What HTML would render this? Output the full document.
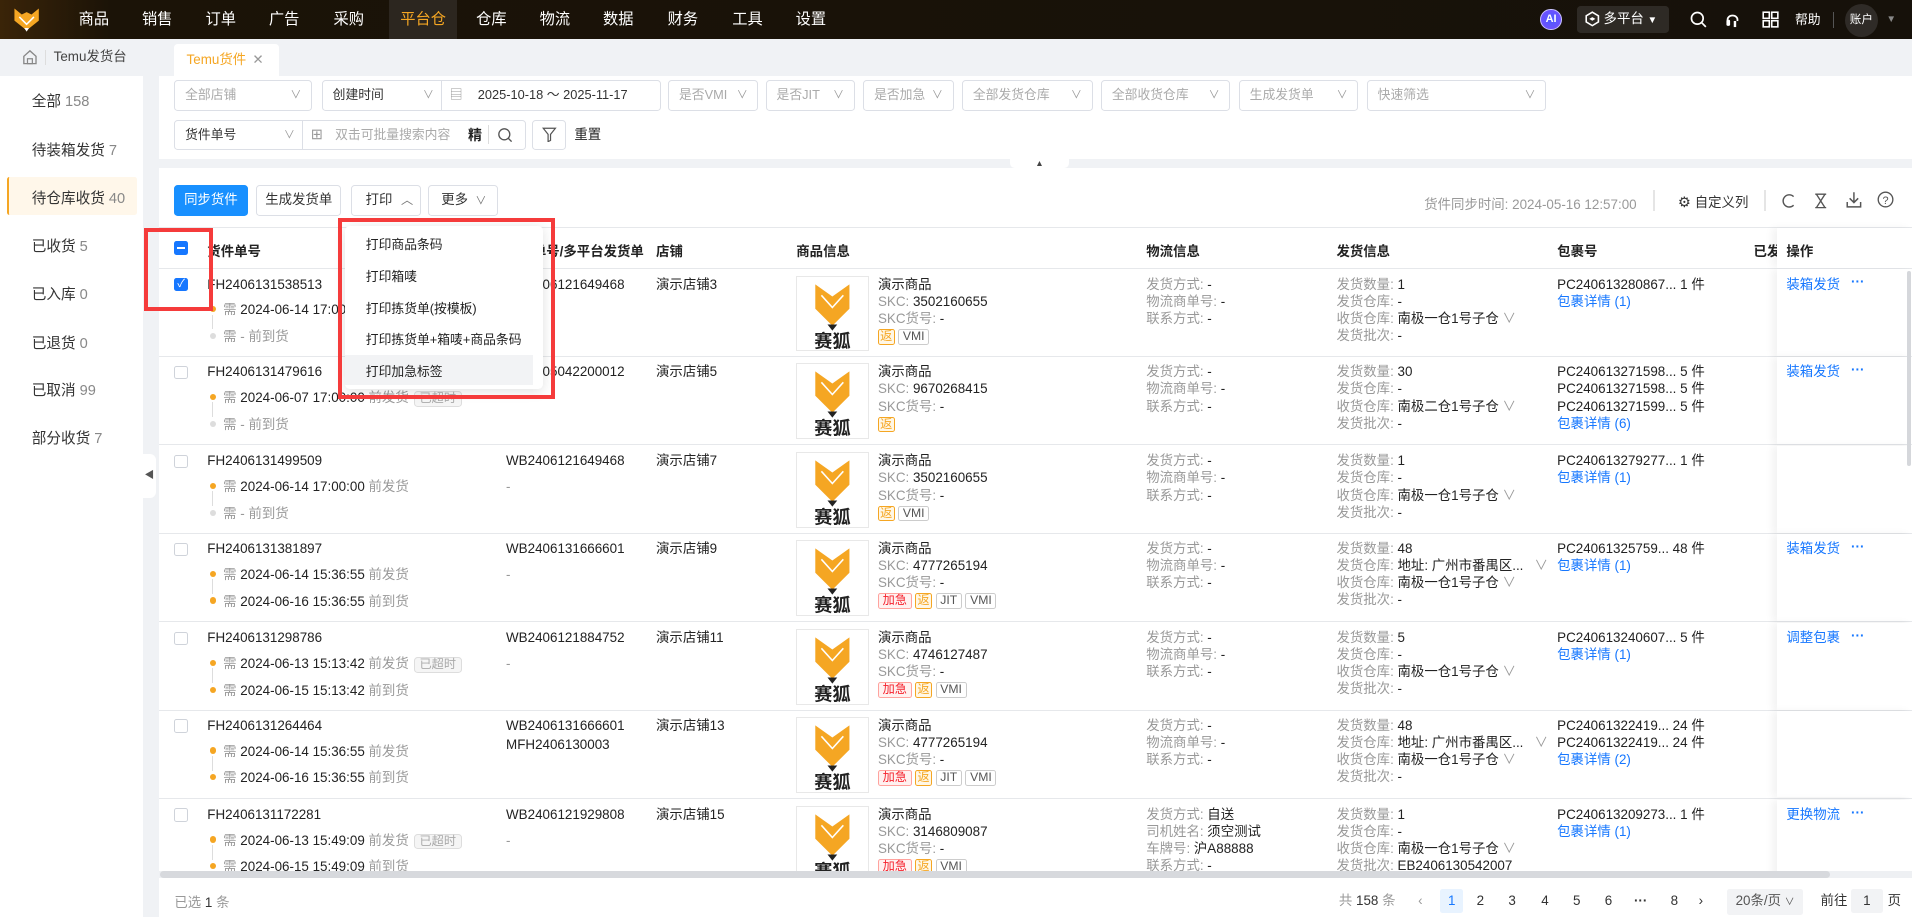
<!DOCTYPE html>
<html><head><meta charset="utf-8">
<style>
html{zoom:1.21939;overflow:hidden;height:752px}
*{box-sizing:border-box;margin:0;padding:0}
body{width:1568px;height:752px;overflow:hidden;position:relative;background:#f0f2f5;font-family:"Liberation Sans","Noto Sans CJK SC",sans-serif;font-size:11px;color:#222}
.a{position:absolute;white-space:nowrap}
.top{position:absolute;left:0;top:0;width:1568px;height:32px;background:linear-gradient(90deg,#3a2408 0,#1b1307 90px,#16110a 100%)}
.nav{position:absolute;top:0;height:32px;line-height:32px;color:#fff;font-size:12.5px;text-align:center}
.tabbar{position:absolute;left:0;top:32px;width:1568px;height:30px;background:#f0f2f5}
.side{position:absolute;left:0;top:62px;width:117px;height:690px;background:#fff}
.side div{position:absolute;left:26px;font-size:12px;color:#333}
.side span{color:#888}
.panel{position:absolute;background:#fff}
.sel{position:absolute;height:25px;border:1px solid #dcdfe6;border-radius:3px;background:#fff;line-height:23px;padding-left:8px;color:#aaa;font-size:10.5px}
.sel i{position:absolute;right:8px;top:0;font-style:normal;color:#999;font-size:9px}
.btn{position:absolute;top:152px;height:25px;border:1px solid #dcdfe6;border-radius:3px;background:#fff;line-height:23px;text-align:center;font-size:11px;color:#333}
.th{position:absolute;top:197px;font-weight:bold;font-size:11px;color:#222}
.row{position:absolute;left:130px;width:1438px;height:72px;border-bottom:1px solid #e6e8eb;background:#fff}
.row .a{line-height:14px}
.g{color:#999}
.b{color:#1677ff}
.cb{position:absolute;width:11px;height:11px;border:1px solid #cfd3da;border-radius:2px;background:#fff}
.dot{position:absolute;width:5px;height:5px;border-radius:50%;background:#f5a623}
.dot.gr{background:#ddd}
.vl{position:absolute;width:1px;height:12px;background:#ddd}
.img{position:absolute;width:60px;height:62px;border:1px solid #e8e8e8;background:#fff}
.tag{display:inline-block;height:13px;line-height:11px;padding:0 3px;border:1px solid #ccc;border-radius:2px;font-size:10px;color:#555;margin-right:3px;background:#fff}
.tag.o{border-color:#f5a623;color:#f5a623;background:#fff7e6;padding:0 1px}
.tag.r{border-color:#ffa39e;color:#f5222d;background:#fff1f0}
.ov{display:inline-block;height:13px;line-height:11px;padding:0 4px;border:1px solid #ddd;border-radius:3px;background:#f5f5f5;color:#aaa;font-size:10px;margin-left:4px}
.act{position:absolute;left:1327px;top:0;width:111px;height:71px;background:#fff;box-shadow:-4px 0 6px rgba(0,0,0,.05)}
.pg{position:absolute;top:729px;font-size:11px;color:#333;line-height:20px;text-align:center}
</style></head><body>

<div class="top">
  <svg class="a" style="left:10px;top:5px" width="24" height="22" viewBox="0 0 24 22"><path d="M2 2 L8 7 L12 5 L16 7 L22 2 L22 12 L12 20 L2 12 Z" fill="#f5a623"/><path d="M6 9 L12 15 L18 9" stroke="#fff" stroke-width="1.3" fill="none"/><path d="M10 18 L14 18 L12 21 Z" fill="#fff"/></svg>
  <div class="nav" style="left:62px;width:30px">商品</div>
  <div class="nav" style="left:114px;width:30px">销售</div>
  <div class="nav" style="left:166px;width:30px">订单</div>
  <div class="nav" style="left:218px;width:30px">广告</div>
  <div class="nav" style="left:271px;width:30px">采购</div>
  <div class="nav" style="left:319px;width:56px;background:#2c261f;color:#f5a623">平台仓</div>
  <div class="nav" style="left:388px;width:30px">仓库</div>
  <div class="nav" style="left:440px;width:30px">物流</div>
  <div class="nav" style="left:492px;width:30px">数据</div>
  <div class="nav" style="left:545px;width:30px">财务</div>
  <div class="nav" style="left:598px;width:30px">工具</div>
  <div class="nav" style="left:650px;width:30px">设置</div>
  <div class="a" style="left:1263px;top:7px;width:18px;height:18px;border-radius:50%;background:radial-gradient(circle,#4a5bff,#7c4dff);border:1.5px solid #c9c4ff;color:#fff;font-size:9px;font-weight:bold;text-align:center;line-height:15px">AI</div>
  <div class="a" style="left:1293px;top:5px;width:76px;height:22px;background:#2e2a25;border-radius:3px;color:#fff;font-size:11px;line-height:22px;padding-left:7px">
    <svg style="vertical-align:-3px" width="12" height="13" viewBox="0 0 12 13"><path d="M6 1 L11 4 L11 9 L6 12 L1 9 L1 4 Z" fill="none" stroke="#fff" stroke-width="1.3"/><path d="M3.5 6.5 L6 5 L8.5 6.5 L6 8 Z" fill="#fff"/></svg> 多平台 <span style="font-size:8px">▼</span></div>
  <svg class="a" style="left:1386px;top:9px" width="14" height="14" viewBox="0 0 14 14"><circle cx="6" cy="6" r="4.8" fill="none" stroke="#fff" stroke-width="1.4"/><path d="M9.5 9.5 L13 13" stroke="#fff" stroke-width="1.4"/></svg>
  <svg class="a" style="left:1414px;top:8px" width="14" height="16" viewBox="0 0 14 16"><path d="M3 9 C2 3 12 3 11 9" fill="none" stroke="#fff" stroke-width="1.5"/><rect x="2" y="8" width="3" height="5" rx="1" fill="#fff"/><path d="M9 9 L9 14" stroke="#fff" stroke-width="2"/></svg>
  <svg class="a" style="left:1445px;top:9px" width="14" height="14" viewBox="0 0 14 14"><rect x="1" y="1" width="5" height="5" fill="none" stroke="#fff" stroke-width="1.3"/><rect x="8" y="1" width="5" height="5" fill="none" stroke="#fff" stroke-width="1.3"/><rect x="1" y="8" width="5" height="5" fill="none" stroke="#fff" stroke-width="1.3"/><rect x="8" y="8" width="5" height="5" fill="none" stroke="#fff" stroke-width="1.3"/></svg>
  <div class="a" style="left:1472px;top:0;line-height:32px;color:#fff;font-size:10.5px">帮助</div>
  <div class="a" style="left:1503px;top:10px;width:1px;height:13px;background:#555"></div>
  <div class="a" style="left:1513px;top:3px;width:27px;height:27px;border-radius:50%;background:#2f2b27;color:#fff;font-size:9.5px;line-height:27px;text-align:center">账户</div>
  <div class="a" style="left:1547px;top:0;line-height:32px;color:#888;font-size:8px">▼</div>
</div>

<div class="tabbar">
  <svg class="a" style="left:18px;top:8px" width="13" height="13" viewBox="0 0 13 13"><path d="M1.5 6 L6.5 1.5 L11.5 6 L11.5 12 L1.5 12 Z" fill="none" stroke="#888" stroke-width="1.1"/><rect x="4.5" y="8" width="4" height="4" fill="none" stroke="#888"/></svg>
  <div class="a" style="left:37px;top:9px;width:1px;height:12px;background:#ddd"></div>
  <div class="a" style="left:44px;top:0;line-height:30px;font-size:11px;color:#444">Temu发货台</div>
  <div class="a" style="left:143px;top:4px;width:86px;height:26px;background:#fff;border-radius:3px 3px 0 0;color:#f5a623;font-size:11px;line-height:26px;padding-left:10px">Temu货件 <span style="color:#999;margin-left:2px">✕</span></div>
</div>

<div class="side">
  <div style="top:12px">全部 <span>158</span></div>
  <div style="top:52px">待装箱发货 <span>7</span></div>
  <div class="a" style="left:6px!important;top:83px;width:106px;height:31px;background:#fff7ea;border-left:2px solid #f5a623;border-radius:2px"></div>
  <div style="top:91px">待仓库收货 <span>40</span></div>
  <div style="top:131px">已收货 <span>5</span></div>
  <div style="top:170px">已入库 <span>0</span></div>
  <div style="top:210px">已退货 <span>0</span></div>
  <div style="top:249px">已取消 <span>99</span></div>
  <div style="top:288px">部分收货 <span>7</span></div>
</div>
<div class="a" style="left:117px;top:372px;width:11px;height:36px;background:#fff;border-radius:0 5px 5px 0;color:#555;font-size:8px;line-height:36px;text-align:center">◀</div>

<div class="panel" style="left:130px;top:62px;width:1438px;height:68px"></div>
<div class="sel" style="left:143px;top:66px;width:113px">全部店铺<i>∨</i></div>
<div class="sel" style="left:264px;top:66px;width:278px;color:#333">创建时间<i style="right:auto;left:82px">∨</i>
  <span class="a" style="left:97px;top:0;width:1px;height:23px;background:#dcdfe6"></span>
  <span class="a" style="left:104px;top:0;color:#999">▤</span>
  <span class="a" style="left:127px;top:0;color:#333">2025-10-18 ～ 2025-11-17</span></div>
<div class="sel" style="left:548px;top:66px;width:74px">是否VMI<i>∨</i></div>
<div class="sel" style="left:628px;top:66px;width:73px">是否JIT<i>∨</i></div>
<div class="sel" style="left:708px;top:66px;width:74px">是否加急<i>∨</i></div>
<div class="sel" style="left:789px;top:66px;width:107px">全部发货仓库<i>∨</i></div>
<div class="sel" style="left:903px;top:66px;width:106px">全部收货仓库<i>∨</i></div>
<div class="sel" style="left:1016px;top:66px;width:98px">生成发货单<i>∨</i></div>
<div class="sel" style="left:1121px;top:66px;width:147px">快速筛选<i>∨</i></div>
<div class="sel" style="left:143px;top:98px;width:288px;color:#333">货件单号<i style="right:auto;left:89px">∨</i>
  <span class="a" style="left:104px;top:0;width:1px;height:23px;background:#dcdfe6"></span>
  <span class="a" style="left:111px;top:0;color:#999;font-size:12px">⊞</span>
  <span class="a" style="left:131px;top:0;color:#aaa">双击可批量搜索内容</span>
  <span class="a" style="left:240px;top:0;color:#222;font-weight:bold;font-size:11.5px">精</span>
  <span class="a" style="left:256px;top:4px;width:1px;height:15px;background:#ddd"></span>
  <svg class="a" style="left:264px;top:5px" width="13" height="13" viewBox="0 0 13 13"><circle cx="6" cy="6" r="4.5" fill="none" stroke="#555" stroke-width="1.1"/><path d="M9.3 9.3 L12 12" stroke="#555" stroke-width="1.1"/></svg></div>
<div class="sel" style="left:436px;top:98px;width:28px;padding:0"><svg class="a" style="left:8px;top:5px" width="12" height="13" viewBox="0 0 12 13"><path d="M1 1 L11 1 L7 6 L7 11 L5 12 L5 6 Z" fill="none" stroke="#555" stroke-width="1"/></svg></div>
<div class="a" style="left:471px;top:98px;line-height:25px;font-size:11px;color:#222">重置</div>
<div class="a" style="left:828px;top:130px;width:49px;height:8px;background:#fff;border-radius:0 0 4px 4px;font-size:7px;text-align:center;line-height:8px;color:#444">▲</div>

<div class="panel" style="left:130px;top:138px;width:1438px;height:614px"></div>
<div class="btn" style="left:143px;width:60px;background:#1890ff;border-color:#1890ff;color:#fff">同步货件</div>
<div class="btn" style="left:210px;width:70px">生成发货单</div>
<div class="btn" style="left:288px;width:57px;text-align:left;padding-left:11px">打印 <span style="color:#777;font-size:10px;margin-left:4px">︿</span></div>
<div class="btn" style="left:351px;width:57px;text-align:left;padding-left:10px">更多 <span style="color:#777;font-size:9px;margin-left:3px">∨</span></div>
<div class="a" style="left:1168px;top:158px;color:#999;font-size:11px">货件同步时间: 2024-05-16 12:57:00</div>
<div class="a" style="left:1356px;top:156px;width:1px;height:17px;background:#e5e5e5"></div>
<div class="a" style="left:1376px;top:157px;font-size:11px;color:#333"><span style="font-size:12px">⚙</span> 自定义列</div>
<div class="a" style="left:1447px;top:156px;width:1px;height:17px;background:#e5e5e5"></div>
<svg class="a" style="left:1461px;top:158px" width="12" height="13" viewBox="0 0 12 13"><path d="M9.5 3 A5 5 0 1 0 9.5 10" fill="none" stroke="#555" stroke-width="1.2"/></svg>
<svg class="a" style="left:1488px;top:158px" width="11" height="13" viewBox="0 0 11 13"><path d="M1 1 L10 1 M1 12 L10 12 M2 1 L9 12 M9 1 L2 12" stroke="#555" stroke-width="1.1" fill="none"/></svg>
<svg class="a" style="left:1514px;top:157px" width="13" height="14" viewBox="0 0 13 14"><path d="M6.5 1 L6.5 9 M3 6 L6.5 9.5 L10 6 M1 9 L1 13 L12 13 L12 9" stroke="#555" stroke-width="1.2" fill="none"/></svg>
<svg class="a" style="left:1539px;top:157px" width="14" height="14" viewBox="0 0 14 14"><circle cx="7" cy="7" r="6" fill="none" stroke="#555" stroke-width="1.1"/><text x="7" y="10.5" font-size="9" text-anchor="middle" fill="#555" font-family="Liberation Sans">?</text></svg>

<div class="a" style="left:130px;top:186px;width:1438px;height:1px;background:#e6e8eb"></div>
<div class="a" style="left:130px;top:220px;width:1438px;height:1px;background:#e6e8eb"></div>
<div class="a" style="left:143px;top:198px;width:11px;height:11px;background:#1677ff;border-radius:2px"><div class="a" style="left:2px;top:4.5px;width:7px;height:1.5px;background:#fff"></div></div>
<div class="th" style="left:170px">货件单号</div>
<div class="th" style="left:415px">物流单号/多平台发货单</div>
<div class="th" style="left:538px">店铺</div>
<div class="th" style="left:653px">商品信息</div>
<div class="th" style="left:940px">物流信息</div>
<div class="th" style="left:1096px">发货信息</div>
<div class="th" style="left:1277px">包裹号</div>
<div class="th" style="left:1438px">已发</div>
<div class="a" style="left:1457px;top:187px;width:111px;height:33px;background:#fff;box-shadow:-4px 0 6px rgba(0,0,0,.05)"></div>
<div class="th" style="left:1465px">操作</div>

<div class="a" style="left:0;top:221px;width:1568px;height:493px;overflow:hidden">
<div style="position:absolute;left:0;top:-221px;width:1568px;height:1000px">

<div class="row" style="top:221px">
  <div class="cb" style="left:13px;top:7px;background:#1677ff;border-color:#1677ff;color:#fff;font-size:9px;line-height:9px;text-align:center">✓</div>
  <div class="a" style="left:40px;top:5px">FH2406131538513</div>
  <div class="dot" style="left:42px;top:30px"></div><div class="vl" style="left:44px;top:37px"></div><div class="dot gr" style="left:42px;top:52px"></div>
  <div class="a" style="left:53px;top:26px"><span class="g">需</span> 2024-06-14 17:00:00 <span class="g">前发货</span></div>
  <div class="a" style="left:53px;top:48px"><span class="g">需 - 前到货</span></div>
  <div class="a" style="left:285px;top:5px">WB2406121649468</div>
  <div class="a g" style="left:285px;top:26px">-</div>
  <div class="a" style="left:408px;top:5px">演示店铺3</div>
  <div class="img" style="left:523px;top:5px"><svg width="58" height="60" viewBox="0 0 58 60"><path d="M15 6 L29 16 L43 6 L43 26 L29 40 L15 26 Z" fill="#f5a623"/><path d="M20 15 L29 25 L38 15" stroke="#fff" stroke-width="1.3" fill="none"/><path d="M25 39 L33 39 L29 44 Z" fill="#222"/><text x="29" y="58" font-size="15" font-weight="bold" text-anchor="middle" fill="#222" font-family="Noto Sans CJK SC">赛狐</text></svg></div>
  <div class="a" style="left:590px;top:5px">演示商品</div>
  <div class="a" style="left:590px;top:19px"><span class="g">SKC:</span> 3502160655</div>
  <div class="a" style="left:590px;top:33px"><span class="g">SKC货号:</span> -</div>
  <div class="a" style="left:590px;top:47px"><span class="tag o">返</span><span class="tag">VMI</span></div>
  <div class="a" style="left:810px;top:5px"><span class="g">发货方式:</span> -</div>
  <div class="a" style="left:810px;top:19px"><span class="g">物流商单号:</span> -</div>
  <div class="a" style="left:810px;top:33px"><span class="g">联系方式:</span> -</div>
  <div class="a" style="left:966px;top:5px"><span class="g">发货数量:</span> 1</div>
  <div class="a" style="left:966px;top:19px"><span class="g">发货仓库:</span> -</div>
  <div class="a" style="left:966px;top:33px"><span class="g">收货仓库:</span> 南极一仓1号子仓 <span class="g">∨</span></div>
  <div class="a" style="left:966px;top:47px"><span class="g">发货批次:</span> -</div>
  <div class="a" style="left:1147px;top:5px">PC240613280867... 1 件</div>
  <div class="a b" style="left:1147px;top:19px">包裹详情 (1)</div>
  <div class="act"><div class="a b" style="left:8px;top:5px">装箱发货</div><div class="a b" style="left:61px;top:3px;font-weight:bold">···</div></div>
</div>

<div class="row" style="top:293px">
  <div class="cb" style="left:13px;top:7px"></div>
  <div class="a" style="left:40px;top:5px">FH2406131479616</div>
  <div class="dot" style="left:42px;top:30px"></div><div class="vl" style="left:44px;top:37px"></div><div class="dot gr" style="left:42px;top:52px"></div>
  <div class="a" style="left:53px;top:26px"><span class="g">需</span> 2024-06-07 17:00:00 <span class="g">前发货</span><span class="ov">已超时</span></div>
  <div class="a" style="left:53px;top:48px"><span class="g">需 - 前到货</span></div>
  <div class="a" style="left:285px;top:5px">WB2405042200012</div>
  <div class="a g" style="left:285px;top:26px">-</div>
  <div class="a" style="left:408px;top:5px">演示店铺5</div>
  <div class="img" style="left:523px;top:5px"><svg width="58" height="60" viewBox="0 0 58 60"><path d="M15 6 L29 16 L43 6 L43 26 L29 40 L15 26 Z" fill="#f5a623"/><path d="M20 15 L29 25 L38 15" stroke="#fff" stroke-width="1.3" fill="none"/><path d="M25 39 L33 39 L29 44 Z" fill="#222"/><text x="29" y="58" font-size="15" font-weight="bold" text-anchor="middle" fill="#222" font-family="Noto Sans CJK SC">赛狐</text></svg></div>
  <div class="a" style="left:590px;top:5px">演示商品</div>
  <div class="a" style="left:590px;top:19px"><span class="g">SKC:</span> 9670268415</div>
  <div class="a" style="left:590px;top:33px"><span class="g">SKC货号:</span> -</div>
  <div class="a" style="left:590px;top:47px"><span class="tag o">返</span></div>
  <div class="a" style="left:810px;top:5px"><span class="g">发货方式:</span> -</div>
  <div class="a" style="left:810px;top:19px"><span class="g">物流商单号:</span> -</div>
  <div class="a" style="left:810px;top:33px"><span class="g">联系方式:</span> -</div>
  <div class="a" style="left:966px;top:5px"><span class="g">发货数量:</span> 30</div>
  <div class="a" style="left:966px;top:19px"><span class="g">发货仓库:</span> -</div>
  <div class="a" style="left:966px;top:33px"><span class="g">收货仓库:</span> 南极二仓1号子仓 <span class="g">∨</span></div>
  <div class="a" style="left:966px;top:47px"><span class="g">发货批次:</span> -</div>
  <div class="a" style="left:1147px;top:5px">PC240613271598... 5 件</div>
  <div class="a" style="left:1147px;top:19px">PC240613271598... 5 件</div>
  <div class="a" style="left:1147px;top:33px">PC240613271599... 5 件</div>
  <div class="a b" style="left:1147px;top:47px">包裹详情 (6)</div>
  <div class="act"><div class="a b" style="left:8px;top:5px">装箱发货</div><div class="a b" style="left:61px;top:3px;font-weight:bold">···</div></div>
</div>

<div class="row" style="top:366px">
  <div class="cb" style="left:13px;top:7px"></div>
  <div class="a" style="left:40px;top:5px">FH2406131499509</div>
  <div class="dot" style="left:42px;top:30px"></div><div class="vl" style="left:44px;top:37px"></div><div class="dot gr" style="left:42px;top:52px"></div>
  <div class="a" style="left:53px;top:26px"><span class="g">需</span> 2024-06-14 17:00:00 <span class="g">前发货</span></div>
  <div class="a" style="left:53px;top:48px"><span class="g">需 - 前到货</span></div>
  <div class="a" style="left:285px;top:5px">WB2406121649468</div>
  <div class="a g" style="left:285px;top:26px">-</div>
  <div class="a" style="left:408px;top:5px">演示店铺7</div>
  <div class="img" style="left:523px;top:5px"><svg width="58" height="60" viewBox="0 0 58 60"><path d="M15 6 L29 16 L43 6 L43 26 L29 40 L15 26 Z" fill="#f5a623"/><path d="M20 15 L29 25 L38 15" stroke="#fff" stroke-width="1.3" fill="none"/><path d="M25 39 L33 39 L29 44 Z" fill="#222"/><text x="29" y="58" font-size="15" font-weight="bold" text-anchor="middle" fill="#222" font-family="Noto Sans CJK SC">赛狐</text></svg></div>
  <div class="a" style="left:590px;top:5px">演示商品</div>
  <div class="a" style="left:590px;top:19px"><span class="g">SKC:</span> 3502160655</div>
  <div class="a" style="left:590px;top:33px"><span class="g">SKC货号:</span> -</div>
  <div class="a" style="left:590px;top:47px"><span class="tag o">返</span><span class="tag">VMI</span></div>
  <div class="a" style="left:810px;top:5px"><span class="g">发货方式:</span> -</div>
  <div class="a" style="left:810px;top:19px"><span class="g">物流商单号:</span> -</div>
  <div class="a" style="left:810px;top:33px"><span class="g">联系方式:</span> -</div>
  <div class="a" style="left:966px;top:5px"><span class="g">发货数量:</span> 1</div>
  <div class="a" style="left:966px;top:19px"><span class="g">发货仓库:</span> -</div>
  <div class="a" style="left:966px;top:33px"><span class="g">收货仓库:</span> 南极一仓1号子仓 <span class="g">∨</span></div>
  <div class="a" style="left:966px;top:47px"><span class="g">发货批次:</span> -</div>
  <div class="a" style="left:1147px;top:5px">PC240613279277... 1 件</div>
  <div class="a b" style="left:1147px;top:19px">包裹详情 (1)</div>
  <div class="act"></div>
</div>

<div class="row" style="top:438px">
  <div class="cb" style="left:13px;top:7px"></div>
  <div class="a" style="left:40px;top:5px">FH2406131381897</div>
  <div class="dot" style="left:42px;top:30px"></div><div class="vl" style="left:44px;top:37px"></div><div class="dot" style="left:42px;top:52px"></div>
  <div class="a" style="left:53px;top:26px"><span class="g">需</span> 2024-06-14 15:36:55 <span class="g">前发货</span></div>
  <div class="a" style="left:53px;top:48px"><span class="g">需</span> 2024-06-16 15:36:55 <span class="g">前到货</span></div>
  <div class="a" style="left:285px;top:5px">WB2406131666601</div>
  <div class="a g" style="left:285px;top:26px">-</div>
  <div class="a" style="left:408px;top:5px">演示店铺9</div>
  <div class="img" style="left:523px;top:5px"><svg width="58" height="60" viewBox="0 0 58 60"><path d="M15 6 L29 16 L43 6 L43 26 L29 40 L15 26 Z" fill="#f5a623"/><path d="M20 15 L29 25 L38 15" stroke="#fff" stroke-width="1.3" fill="none"/><path d="M25 39 L33 39 L29 44 Z" fill="#222"/><text x="29" y="58" font-size="15" font-weight="bold" text-anchor="middle" fill="#222" font-family="Noto Sans CJK SC">赛狐</text></svg></div>
  <div class="a" style="left:590px;top:5px">演示商品</div>
  <div class="a" style="left:590px;top:19px"><span class="g">SKC:</span> 4777265194</div>
  <div class="a" style="left:590px;top:33px"><span class="g">SKC货号:</span> -</div>
  <div class="a" style="left:590px;top:47px"><span class="tag r">加急</span><span class="tag o">返</span><span class="tag">JIT</span><span class="tag">VMI</span></div>
  <div class="a" style="left:810px;top:5px"><span class="g">发货方式:</span> -</div>
  <div class="a" style="left:810px;top:19px"><span class="g">物流商单号:</span> -</div>
  <div class="a" style="left:810px;top:33px"><span class="g">联系方式:</span> -</div>
  <div class="a" style="left:966px;top:5px"><span class="g">发货数量:</span> 48</div>
  <div class="a" style="left:966px;top:19px"><span class="g">发货仓库:</span> 地址: 广州市番禺区... <span class="g" style="margin-left:6px">∨</span></div>
  <div class="a" style="left:966px;top:33px"><span class="g">收货仓库:</span> 南极一仓1号子仓 <span class="g">∨</span></div>
  <div class="a" style="left:966px;top:47px"><span class="g">发货批次:</span> -</div>
  <div class="a" style="left:1147px;top:5px">PC24061325759... 48 件</div>
  <div class="a b" style="left:1147px;top:19px">包裹详情 (1)</div>
  <div class="act"><div class="a b" style="left:8px;top:5px">装箱发货</div><div class="a b" style="left:61px;top:3px;font-weight:bold">···</div></div>
</div>

<div class="row" style="top:511px">
  <div class="cb" style="left:13px;top:7px"></div>
  <div class="a" style="left:40px;top:5px">FH2406131298786</div>
  <div class="dot" style="left:42px;top:30px"></div><div class="vl" style="left:44px;top:37px"></div><div class="dot" style="left:42px;top:52px"></div>
  <div class="a" style="left:53px;top:26px"><span class="g">需</span> 2024-06-13 15:13:42 <span class="g">前发货</span><span class="ov">已超时</span></div>
  <div class="a" style="left:53px;top:48px"><span class="g">需</span> 2024-06-15 15:13:42 <span class="g">前到货</span></div>
  <div class="a" style="left:285px;top:5px">WB2406121884752</div>
  <div class="a g" style="left:285px;top:26px">-</div>
  <div class="a" style="left:408px;top:5px">演示店铺11</div>
  <div class="img" style="left:523px;top:5px"><svg width="58" height="60" viewBox="0 0 58 60"><path d="M15 6 L29 16 L43 6 L43 26 L29 40 L15 26 Z" fill="#f5a623"/><path d="M20 15 L29 25 L38 15" stroke="#fff" stroke-width="1.3" fill="none"/><path d="M25 39 L33 39 L29 44 Z" fill="#222"/><text x="29" y="58" font-size="15" font-weight="bold" text-anchor="middle" fill="#222" font-family="Noto Sans CJK SC">赛狐</text></svg></div>
  <div class="a" style="left:590px;top:5px">演示商品</div>
  <div class="a" style="left:590px;top:19px"><span class="g">SKC:</span> 4746127487</div>
  <div class="a" style="left:590px;top:33px"><span class="g">SKC货号:</span> -</div>
  <div class="a" style="left:590px;top:47px"><span class="tag r">加急</span><span class="tag o">返</span><span class="tag">VMI</span></div>
  <div class="a" style="left:810px;top:5px"><span class="g">发货方式:</span> -</div>
  <div class="a" style="left:810px;top:19px"><span class="g">物流商单号:</span> -</div>
  <div class="a" style="left:810px;top:33px"><span class="g">联系方式:</span> -</div>
  <div class="a" style="left:966px;top:5px"><span class="g">发货数量:</span> 5</div>
  <div class="a" style="left:966px;top:19px"><span class="g">发货仓库:</span> -</div>
  <div class="a" style="left:966px;top:33px"><span class="g">收货仓库:</span> 南极一仓1号子仓 <span class="g">∨</span></div>
  <div class="a" style="left:966px;top:47px"><span class="g">发货批次:</span> -</div>
  <div class="a" style="left:1147px;top:5px">PC240613240607... 5 件</div>
  <div class="a b" style="left:1147px;top:19px">包裹详情 (1)</div>
  <div class="act"><div class="a b" style="left:8px;top:5px">调整包裹</div><div class="a b" style="left:61px;top:3px;font-weight:bold">···</div></div>
</div>

<div class="row" style="top:583px">
  <div class="cb" style="left:13px;top:7px"></div>
  <div class="a" style="left:40px;top:5px">FH2406131264464</div>
  <div class="dot" style="left:42px;top:30px"></div><div class="vl" style="left:44px;top:37px"></div><div class="dot" style="left:42px;top:52px"></div>
  <div class="a" style="left:53px;top:26px"><span class="g">需</span> 2024-06-14 15:36:55 <span class="g">前发货</span></div>
  <div class="a" style="left:53px;top:48px"><span class="g">需</span> 2024-06-16 15:36:55 <span class="g">前到货</span></div>
  <div class="a" style="left:285px;top:5px">WB2406131666601</div>
  <div class="a" style="left:285px;top:21px">MFH2406130003</div>
  <div class="a" style="left:408px;top:5px">演示店铺13</div>
  <div class="img" style="left:523px;top:5px"><svg width="58" height="60" viewBox="0 0 58 60"><path d="M15 6 L29 16 L43 6 L43 26 L29 40 L15 26 Z" fill="#f5a623"/><path d="M20 15 L29 25 L38 15" stroke="#fff" stroke-width="1.3" fill="none"/><path d="M25 39 L33 39 L29 44 Z" fill="#222"/><text x="29" y="58" font-size="15" font-weight="bold" text-anchor="middle" fill="#222" font-family="Noto Sans CJK SC">赛狐</text></svg></div>
  <div class="a" style="left:590px;top:5px">演示商品</div>
  <div class="a" style="left:590px;top:19px"><span class="g">SKC:</span> 4777265194</div>
  <div class="a" style="left:590px;top:33px"><span class="g">SKC货号:</span> -</div>
  <div class="a" style="left:590px;top:47px"><span class="tag r">加急</span><span class="tag o">返</span><span class="tag">JIT</span><span class="tag">VMI</span></div>
  <div class="a" style="left:810px;top:5px"><span class="g">发货方式:</span> -</div>
  <div class="a" style="left:810px;top:19px"><span class="g">物流商单号:</span> -</div>
  <div class="a" style="left:810px;top:33px"><span class="g">联系方式:</span> -</div>
  <div class="a" style="left:966px;top:5px"><span class="g">发货数量:</span> 48</div>
  <div class="a" style="left:966px;top:19px"><span class="g">发货仓库:</span> 地址: 广州市番禺区... <span class="g" style="margin-left:6px">∨</span></div>
  <div class="a" style="left:966px;top:33px"><span class="g">收货仓库:</span> 南极一仓1号子仓 <span class="g">∨</span></div>
  <div class="a" style="left:966px;top:47px"><span class="g">发货批次:</span> -</div>
  <div class="a" style="left:1147px;top:5px">PC24061322419... 24 件</div>
  <div class="a" style="left:1147px;top:19px">PC24061322419... 24 件</div>
  <div class="a b" style="left:1147px;top:33px">包裹详情 (2)</div>
  <div class="act"></div>
</div>

<div class="row" style="top:656px">
  <div class="cb" style="left:13px;top:7px"></div>
  <div class="a" style="left:40px;top:5px">FH2406131172281</div>
  <div class="dot" style="left:42px;top:30px"></div><div class="vl" style="left:44px;top:37px"></div><div class="dot" style="left:42px;top:52px"></div>
  <div class="a" style="left:53px;top:26px"><span class="g">需</span> 2024-06-13 15:49:09 <span class="g">前发货</span><span class="ov">已超时</span></div>
  <div class="a" style="left:53px;top:48px"><span class="g">需</span> 2024-06-15 15:49:09 <span class="g">前到货</span></div>
  <div class="a" style="left:285px;top:5px">WB2406121929808</div>
  <div class="a g" style="left:285px;top:26px">-</div>
  <div class="a" style="left:408px;top:5px">演示店铺15</div>
  <div class="img" style="left:523px;top:5px"><svg width="58" height="60" viewBox="0 0 58 60"><path d="M15 6 L29 16 L43 6 L43 26 L29 40 L15 26 Z" fill="#f5a623"/><path d="M20 15 L29 25 L38 15" stroke="#fff" stroke-width="1.3" fill="none"/><path d="M25 39 L33 39 L29 44 Z" fill="#222"/><text x="29" y="58" font-size="15" font-weight="bold" text-anchor="middle" fill="#222" font-family="Noto Sans CJK SC">赛狐</text></svg></div>
  <div class="a" style="left:590px;top:5px">演示商品</div>
  <div class="a" style="left:590px;top:19px"><span class="g">SKC:</span> 3146809087</div>
  <div class="a" style="left:590px;top:33px"><span class="g">SKC货号:</span> -</div>
  <div class="a" style="left:590px;top:47px"><span class="tag r">加急</span><span class="tag o">返</span><span class="tag">VMI</span></div>
  <div class="a" style="left:810px;top:5px"><span class="g">发货方式:</span> 自送</div>
  <div class="a" style="left:810px;top:19px"><span class="g">司机姓名:</span> 须空测试</div>
  <div class="a" style="left:810px;top:33px"><span class="g">车牌号:</span> 沪A88888</div>
  <div class="a" style="left:810px;top:47px"><span class="g">联系方式:</span> -</div>
  <div class="a" style="left:966px;top:5px"><span class="g">发货数量:</span> 1</div>
  <div class="a" style="left:966px;top:19px"><span class="g">发货仓库:</span> -</div>
  <div class="a" style="left:966px;top:33px"><span class="g">收货仓库:</span> 南极一仓1号子仓 <span class="g">∨</span></div>
  <div class="a" style="left:966px;top:47px"><span class="g">发货批次:</span> EB2406130542007</div>
  <div class="a" style="left:1147px;top:5px">PC240613209273... 1 件</div>
  <div class="a b" style="left:1147px;top:19px">包裹详情 (1)</div>
  <div class="act"><div class="a b" style="left:8px;top:5px">更换物流</div><div class="a b" style="left:61px;top:3px;font-weight:bold">···</div></div>
</div>
</div></div>

<div class="a" style="left:1564px;top:222px;width:3px;height:160px;background:#d5d7db;border-radius:2px"></div>
<div class="a" style="left:130px;top:714px;width:1438px;height:6px;background:#eef0f3"></div>
<div class="a" style="left:131px;top:714px;width:1370px;height:6px;background:#d7d9dd;border-radius:3px"></div>

<div class="a" style="left:143px;top:731px;font-size:11px;color:#999">已选 <span style="color:#333">1</span> 条</div>
<div class="pg" style="left:1098px;color:#999">共 <span style="color:#333">158</span> 条</div>
<div class="pg" style="left:1163px;color:#999">‹</div>
<div class="pg" style="left:1181px;width:19px;background:#e8f3ff;color:#1677ff;border-radius:2px">1</div>
<div class="pg" style="left:1211px">2</div>
<div class="pg" style="left:1237px">3</div>
<div class="pg" style="left:1264px">4</div>
<div class="pg" style="left:1290px">5</div>
<div class="pg" style="left:1316px">6</div>
<div class="pg" style="left:1340px;font-weight:bold">···</div>
<div class="pg" style="left:1370px">8</div>
<div class="pg" style="left:1393px">›</div>
<div class="pg" style="left:1416px;width:63px;background:#f2f3f5;border-radius:2px;color:#555">20条/页 <span style="font-size:8px">∨</span></div>
<div class="pg" style="left:1493px">前往</div>
<div class="pg" style="left:1518px;width:26px;background:#f2f3f5;border-radius:2px">1</div>
<div class="pg" style="left:1548px">页</div>

<div class="a" style="left:283px;top:185px;width:162px;height:134px;background:#fff;border-radius:4px;box-shadow:0 2px 10px rgba(0,0,0,.12)">
  <div class="a" style="left:17px;top:7px;font-size:10.5px">打印商品条码</div>
  <div class="a" style="left:17px;top:33px;font-size:10.5px">打印箱唛</div>
  <div class="a" style="left:17px;top:59px;font-size:10.5px">打印拣货单(按模板)</div>
  <div class="a" style="left:17px;top:85px;font-size:10.5px">打印拣货单+箱唛+商品条码</div>
  <div class="a" style="left:0;top:106px;width:154px;height:25px;background:#f2f3f5"></div>
  <div class="a" style="left:17px;top:111px;font-size:10.5px">打印加急标签</div>
</div>
<div class="a" style="left:277px;top:179px;width:178px;height:148px;border:4px solid #f53b3b"></div>
<div class="a" style="left:118px;top:187px;width:57px;height:68px;border:4px solid #f53b3b"></div>
</body></html>
